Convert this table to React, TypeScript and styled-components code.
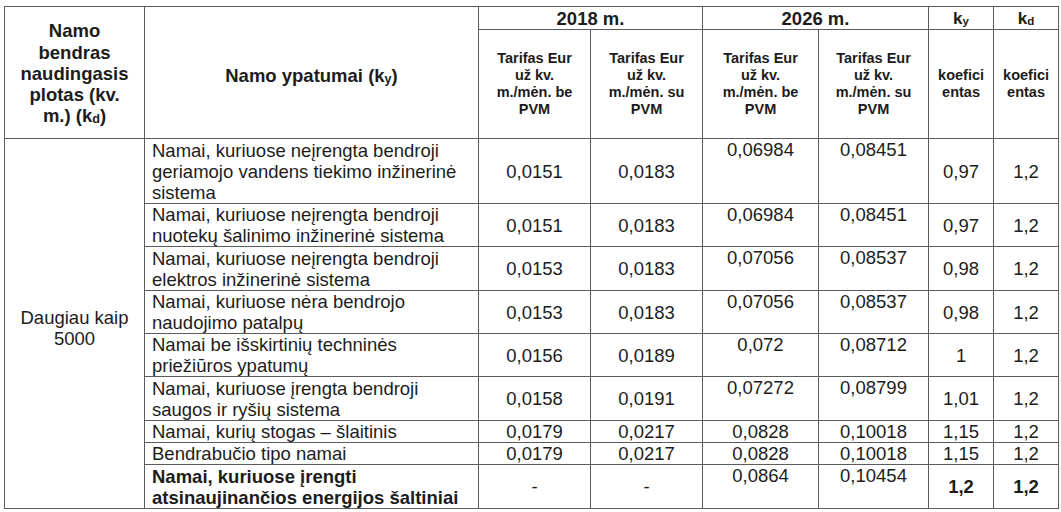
import React from "react";
import styled, { createGlobalStyle } from "styled-components";

const Global = createGlobalStyle`
  html, body { margin: 0; padding: 0; background: #ffffff; }
  body {
    padding: 6px 0 0 4px;
    font-family: "Liberation Sans", Arial, sans-serif;
    color: #1c1c1c;
  }
`;

const Table = styled.table`
  border-collapse: collapse;
  table-layout: fixed;
  width: 1055px;
  font-family: "Liberation Sans", Arial, sans-serif;
  color: #1c1c1c;
`;

const Row = styled.tr<{ $h: number }>`
  height: ${(p) => p.$h}px;
`;

const Th = styled.th<{ $size?: number; $lh?: number; $padTop?: number }>`
  border: 1px solid #5c5c5c;
  font-weight: bold;
  font-size: ${(p) => p.$size ?? 18.5}px;
  line-height: ${(p) => p.$lh ?? 21.3}px;
  text-align: center;
  vertical-align: middle;
  padding: ${(p) => p.$padTop ?? 0}px 1px 0 1px;
  white-space: nowrap;
`;

const Td = styled.td<{
  $valign?: "top" | "middle";
  $align?: "left" | "center";
  $bold?: boolean;
  $padTop?: number;
}>`
  border: 1px solid #5c5c5c;
  font-size: 18.5px;
  line-height: 21px;
  font-weight: ${(p) => (p.$bold ? "bold" : "normal")};
  text-align: ${(p) => p.$align ?? "center"};
  vertical-align: ${(p) => p.$valign ?? "middle"};
  padding: ${(p) => p.$padTop ?? 0}px ${(p) => (p.$align === "left" ? "1px 0 7px" : "1px 0 1px")};
  white-space: nowrap;
  overflow: visible;
`;

const Sub = styled.span`
  font-size: 0.68em;
  line-height: 0;
  vertical-align: -0.1em;
`;

type Body = {
  h: number;
  desc: React.ReactNode;
  bold?: boolean;
  a: string;
  b: string;
  c: string;
  d: string;
  ky: string;
  kd: string;
};

const rows: Body[] = [
  {
    h: 65,
    desc: (
      <>
        Namai, kuriuose neįrengta bendroji
        <br />
        geriamojo vandens tiekimo inžinerinė
        <br />
        sistema
      </>
    ),
    a: "0,0151",
    b: "0,0183",
    c: "0,06984",
    d: "0,08451",
    ky: "0,97",
    kd: "1,2",
  },
  {
    h: 43,
    desc: (
      <>
        Namai, kuriuose neįrengta bendroji
        <br />
        nuotekų šalinimo inžinerinė sistema
      </>
    ),
    a: "0,0151",
    b: "0,0183",
    c: "0,06984",
    d: "0,08451",
    ky: "0,97",
    kd: "1,2",
  },
  {
    h: 44,
    desc: (
      <>
        Namai, kuriuose neįrengta bendroji
        <br />
        elektros inžinerinė sistema
      </>
    ),
    a: "0,0153",
    b: "0,0183",
    c: "0,07056",
    d: "0,08537",
    ky: "0,98",
    kd: "1,2",
  },
  {
    h: 43,
    desc: (
      <>
        Namai, kuriuose nėra bendrojo
        <br />
        naudojimo patalpų
      </>
    ),
    a: "0,0153",
    b: "0,0183",
    c: "0,07056",
    d: "0,08537",
    ky: "0,98",
    kd: "1,2",
  },
  {
    h: 43,
    desc: (
      <>
        Namai be išskirtinių techninės
        <br />
        priežiūros ypatumų
      </>
    ),
    a: "0,0156",
    b: "0,0189",
    c: "0,072",
    d: "0,08712",
    ky: "1",
    kd: "1,2",
  },
  {
    h: 44,
    desc: (
      <>
        Namai, kuriuose įrengta bendroji
        <br />
        saugos ir ryšių sistema
      </>
    ),
    a: "0,0158",
    b: "0,0191",
    c: "0,07272",
    d: "0,08799",
    ky: "1,01",
    kd: "1,2",
  },
  {
    h: 21,
    desc: <>Namai, kurių stogas – šlaitinis</>,
    a: "0,0179",
    b: "0,0217",
    c: "0,0828",
    d: "0,10018",
    ky: "1,15",
    kd: "1,2",
  },
  {
    h: 22,
    desc: <>Bendrabučio tipo namai</>,
    a: "0,0179",
    b: "0,0217",
    c: "0,0828",
    d: "0,10018",
    ky: "1,15",
    kd: "1,2",
  },
  {
    h: 44,
    bold: true,
    desc: (
      <>
        Namai, kuriuose įrengti
        <br />
        atsinaujinančios energijos šaltiniai
      </>
    ),
    a: "-",
    b: "-",
    c: "0,0864",
    d: "0,10454",
    ky: "1,2",
    kd: "1,2",
  },
];

const widths = [140, 334, 112, 112, 116, 110, 65, 65];

export default function App() {
  return (
    <>
      <Global />
      <Table>
        <colgroup>
          {widths.map((w, i) => (
            <col key={i} style={{ width: w }} />
          ))}
        </colgroup>
        <thead>
          <Row $h={23}>
            <Th rowSpan={2} $padTop={2}>
              Namo
              <br />
              bendras
              <br />
              naudingasis
              <br />
              plotas (kv.
              <br />
              m.) (k<Sub>d</Sub>)
            </Th>
            <Th rowSpan={2} $padTop={6}>
              Namo ypatumai (k<Sub>y</Sub>)
            </Th>
            <Th colSpan={2} $lh={21}>2018 m.</Th>
            <Th colSpan={2} $lh={21}>2026 m.</Th>
            <Th $size={17} $lh={21}>
              k<Sub>y</Sub>
            </Th>
            <Th $size={17} $lh={21}>
              k<Sub>d</Sub>
            </Th>
          </Row>
          <Row $h={109}>
            <Th $size={14.5} $lh={17}>
              Tarifas Eur
              <br />
              už kv.
              <br />
              m./mėn. be
              <br />
              PVM
            </Th>
            <Th $size={14.5} $lh={17}>
              Tarifas Eur
              <br />
              už kv.
              <br />
              m./mėn. su
              <br />
              PVM
            </Th>
            <Th $size={14.5} $lh={17}>
              Tarifas Eur
              <br />
              už kv.
              <br />
              m./mėn. be
              <br />
              PVM
            </Th>
            <Th $size={14.5} $lh={17}>
              Tarifas Eur
              <br />
              už kv.
              <br />
              m./mėn. su
              <br />
              PVM
            </Th>
            <Th $size={14.5} $lh={17}>
              koefici
              <br />
              entas
            </Th>
            <Th $size={14.5} $lh={17}>
              koefici
              <br />
              entas
            </Th>
          </Row>
        </thead>
        <tbody>
          {rows.map((r, i) => (
            <Row key={i} $h={r.h}>
              {i === 0 && (
                <Td rowSpan={rows.length} $padTop={8}>
                  Daugiau kaip
                  <br />
                  5000
                </Td>
              )}
              <Td $align="left" $bold={r.bold}>
                {r.desc}
              </Td>
              <Td>{r.a}</Td>
              <Td>{r.b}</Td>
              <Td $valign="top">{r.c}</Td>
              <Td $valign="top">{r.d}</Td>
              <Td $bold={r.bold}>{r.ky}</Td>
              <Td $bold={r.bold}>{r.kd}</Td>
            </Row>
          ))}
        </tbody>
      </Table>
    </>
  );
}
